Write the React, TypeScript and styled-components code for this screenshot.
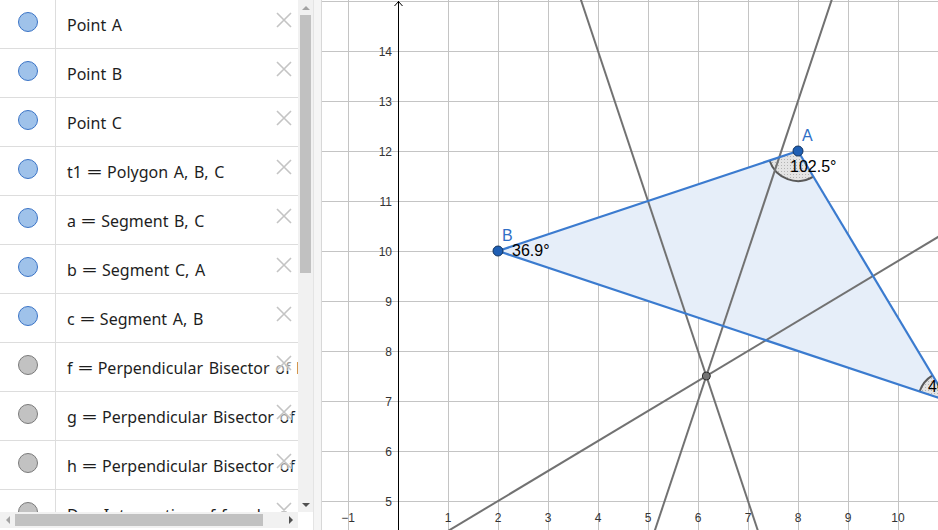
import React from "react";
import styled, { createGlobalStyle } from "styled-components";

type Item = {
  label: string;
  free: boolean;
};

const items: Item[] = [
  { label: "Point A", free: true },
  { label: "Point B", free: true },
  { label: "Point C", free: true },
  { label: "t1 = Polygon A, B, C", free: true },
  { label: "a = Segment B, C", free: true },
  { label: "b = Segment C, A", free: true },
  { label: "c = Segment A, B", free: true },
  { label: "f = Perpendicular Bisector of B, C", free: false },
  { label: "g = Perpendicular Bisector of C, A", free: false },
  { label: "h = Perpendicular Bisector of A, B", free: false },
  { label: "D = Intersection of f and g", free: false },
];

// graphics view: 50px per unit, x = 0 at svg x 76, y = 14 at svg y 51
const gx = (x: number) => 76 + 50 * x;
const gy = (y: number) => 751 - 50 * y;

const A = { x: 8, y: 12 };
const B = { x: 2, y: 10 };
const C = { x: 11, y: 7 };
const D = { x: 37 / 6, y: 7.5 };

const bisectors = [
  // AB: y = 26 - 3x
  [3, 17, 8, 2],
  // BC: y = 3x - 11
  [4, 1, 9, 16],
  // CA: y = (3x + 19) / 5
  [-3, 2, 12, 11],
];

const xTicks = [-1, 1, 2, 3, 4, 5, 6, 7, 8, 9, 10];
const yTicks = [14, 13, 12, 11, 10, 9, 8, 7, 6, 5];

const polar = (cx: number, cy: number, r: number, deg: number) => {
  const a = (deg * Math.PI) / 180;
  return [cx + r * Math.cos(a), cy + r * Math.sin(a)];
};

// angle sector on screen coords, from -> to going clockwise
const sector = (cx: number, cy: number, r: number, from: number, to: number) => {
  const [x1, y1] = polar(cx, cy, r, from);
  const [x2, y2] = polar(cx, cy, r, to);
  return {
    fill: `M${cx} ${cy} L${x1} ${y1} A${r} ${r} 0 0 1 ${x2} ${y2} Z`,
    arc: `M${x1} ${y1} A${r} ${r} 0 0 1 ${x2} ${y2}`,
  };
};

const angleA = sector(gx(A.x), gy(A.y), 30, 59.04, 161.57);
const angleC = sector(gx(C.x), gy(C.y), 30, 198.43, 239.04);

function renderLabel(label: string) {
  const [lhs, rhs] = label.split(" = ");
  if (rhs === undefined) return label;
  return (
    <>
      {lhs}
      <Eq>=</Eq>
      {rhs}
    </>
  );
}

export default function App() {
  return (
    <>
      <GlobalStyle />
      <Shell>
        <AlgebraPanel>
          <AlgebraBody>
            <ItemList>
              {items.map((item) => (
                <Row key={item.label}>
                  <MarbleCell>
                    <Marble $free={item.free} />
                  </MarbleCell>
                  <Definition>{renderLabel(item.label)}</Definition>
                  <DeleteButton>
                    <svg width="16" height="16" viewBox="0 0 16 16">
                      <path
                        d="M1 1 L15 15 M15 1 L1 15"
                        stroke="#c4c4c4"
                        strokeWidth="1.6"
                        fill="none"
                      />
                    </svg>
                  </DeleteButton>
                </Row>
              ))}
            </ItemList>
            <VScroll>
              <ArrowBox>
                <Triangle $dir="up" $dark={false} />
              </ArrowBox>
              <VThumb />
              <Spacer />
              <ArrowBox>
                <Triangle $dir="down" $dark />
              </ArrowBox>
            </VScroll>
          </AlgebraBody>
          <HScrollRow>
            <HScroll>
              <ArrowBox>
                <Triangle $dir="left" $dark={false} />
              </ArrowBox>
              <HThumb />
              <Spacer />
              <ArrowBox>
                <Triangle $dir="right" $dark />
              </ArrowBox>
            </HScroll>
            <Corner />
          </HScrollRow>
        </AlgebraPanel>
        <Splitter />
        <Graphics>
          <svg width="616" height="530" viewBox="0 0 616 530">
            <defs>
              <pattern id="dots" width="3" height="3" patternUnits="userSpaceOnUse">
                <rect width="3" height="3" fill="#e4e4e4" />
                <rect width="1" height="1" fill="#b4b4b4" />
              </pattern>
            </defs>

            {xTicks.map((t) => (
              <line
                key={`gx${t}`}
                x1={gx(t) + 0.5}
                y1={0}
                x2={gx(t) + 0.5}
                y2={530}
                stroke="#c4c4c4"
                strokeWidth="1"
              />
            ))}
            {[15, ...yTicks].map((t) => (
              <line
                key={`gy${t}`}
                x1={0}
                y1={gy(t) + 0.5}
                x2={616}
                y2={gy(t) + 0.5}
                stroke="#c4c4c4"
                strokeWidth="1"
              />
            ))}

            <line x1={76.5} y1={1} x2={76.5} y2={530} stroke="#000" strokeWidth="1" />
            <polyline points="72.5,6 76.5,1.5 80.5,6" fill="none" stroke="#000" strokeWidth="1" />

            {yTicks.map((t) => (
              <AxisLabel key={`ly${t}`} x={70} y={gy(t) + 5} textAnchor="end">
                {t}
              </AxisLabel>
            ))}
            {xTicks.map((t) => (
              <AxisLabel key={`lx${t}`} x={gx(t)} y={522} textAnchor="middle">
                {t < 0 ? `\u2212${-t}` : t}
              </AxisLabel>
            ))}

            <polygon
              points={`${gx(A.x)},${gy(A.y)} ${gx(B.x)},${gy(B.y)} ${gx(C.x)},${gy(C.y)}`}
              fill="#e6eef9"
            />

            <path d={angleA.fill} fill="url(#dots)" />
            <path d={angleA.arc} fill="none" stroke="#5a5a5a" strokeWidth="2" />
            <path d={angleC.fill} fill="url(#dots)" />
            <path d={angleC.arc} fill="none" stroke="#5a5a5a" strokeWidth="2" />

            {bisectors.map(([x1, y1, x2, y2], i) => (
              <line
                key={`b${i}`}
                x1={gx(x1)}
                y1={gy(y1)}
                x2={gx(x2)}
                y2={gy(y2)}
                stroke="#727272"
                strokeWidth="2"
              />
            ))}

            {[
              [A, B],
              [B, C],
              [C, A],
            ].map(([p, q], i) => (
              <line
                key={`s${i}`}
                x1={gx(p.x)}
                y1={gy(p.y)}
                x2={gx(q.x)}
                y2={gy(q.y)}
                stroke="#3b7bcf"
                strokeWidth="2.2"
              />
            ))}

            <circle cx={gx(D.x)} cy={gy(D.y)} r={4} fill="#737373" stroke="#2e2e2e" strokeWidth="1" />
            <circle cx={gx(A.x)} cy={gy(A.y)} r={5} fill="#1f5fb4" stroke="#12345f" strokeWidth="1" />
            <circle cx={gx(B.x)} cy={gy(B.y)} r={5} fill="#1f5fb4" stroke="#12345f" strokeWidth="1" />

            <PointLabel x={480} y={141}>A</PointLabel>
            <PointLabel x={180} y={241}>B</PointLabel>

            <AngleLabel x={468} y={172}>102.5°</AngleLabel>
            <AngleLabel x={190} y={256}>36.9°</AngleLabel>
            <AngleLabel x={606} y={392}>40.6°</AngleLabel>
          </svg>
        </Graphics>
      </Shell>
    </>
  );
}

const GlobalStyle = createGlobalStyle`
  html, body {
    margin: 0;
    padding: 0;
    background: #ffffff;
  }

  body {
    font-family: "Liberation Sans", Arial, sans-serif;
    overflow: hidden;
  }
`;

const Shell = styled.div`
  display: flex;
  width: 938px;
  height: 530px;
  overflow: hidden;
  background: #ffffff;
`;

const AlgebraPanel = styled.div`
  width: 313px;
  flex-shrink: 0;
  display: flex;
  flex-direction: column;
  background: #ffffff;
`;

const AlgebraBody = styled.div`
  display: flex;
  height: 512px;
`;

const ItemList = styled.div`
  width: 298px;
  overflow: hidden;
`;

const Row = styled.div`
  position: relative;
  display: flex;
  height: 48px;
  border-bottom: 1px solid #dddddd;
`;

const MarbleCell = styled.div`
  width: 56px;
  flex-shrink: 0;
  box-sizing: border-box;
  border-right: 1px solid #dddddd;
  display: flex;
  justify-content: center;
  padding-top: 12px;
`;

const Marble = styled.div<{ $free: boolean }>`
  width: 20px;
  height: 20px;
  box-sizing: border-box;
  border-radius: 50%;
  border: 1px solid ${(p) => (p.$free ? "#3b74c6" : "#7a7a7a")};
  background: ${(p) => (p.$free ? "#9fc2ea" : "#c2c2c2")};
`;

const Definition = styled.div`
  display: flex;
  align-items: center;
  padding: 2px 0 0 11px;
  font-family: "Noto Sans", "Liberation Sans", sans-serif;
  font-size: 16px;
  word-spacing: 1.5px;
  color: #1e1e1e;
  white-space: pre;
`;

const Eq = styled.span`
  display: inline-block;
  margin: 0 8px;
  transform: scaleX(1.7);
`;

const DeleteButton = styled.div`
  position: absolute;
  top: 12px;
  right: 6px;
  width: 16px;
  height: 16px;
  display: flex;
  background: rgba(255, 255, 255, 0.55);
`;

const VScroll = styled.div`
  width: 15px;
  display: flex;
  flex-direction: column;
  background: #f1f1f1;
`;

const ArrowBox = styled.div`
  width: 15px;
  height: 15px;
  flex-shrink: 0;
  display: flex;
  align-items: center;
  justify-content: center;
`;

const Triangle = styled.div<{ $dir: "up" | "down" | "left" | "right"; $dark: boolean }>`
  width: 0;
  height: 0;
  ${(p) => {
    const c = p.$dark ? "#505050" : "#a3a3a3";
    switch (p.$dir) {
      case "up":
        return `border-left: 4px solid transparent; border-right: 4px solid transparent; border-bottom: 4px solid ${c};`;
      case "down":
        return `border-left: 4px solid transparent; border-right: 4px solid transparent; border-top: 4px solid ${c};`;
      case "left":
        return `border-top: 4px solid transparent; border-bottom: 4px solid transparent; border-right: 4px solid ${c};`;
      default:
        return `border-top: 4px solid transparent; border-bottom: 4px solid transparent; border-left: 4px solid ${c};`;
    }
  }}
`;

const VThumb = styled.div`
  height: 258px;
  margin: 0 2px;
  background: #c1c1c1;
`;

const Spacer = styled.div`
  flex: 1;
`;

const HScrollRow = styled.div`
  display: flex;
  height: 16px;
  margin-bottom: 2px;
`;

const HScroll = styled.div`
  width: 298px;
  display: flex;
  align-items: center;
  background: #f1f1f1;
`;

const HThumb = styled.div`
  width: 248px;
  height: 12px;
  background: #c1c1c1;
`;

const Corner = styled.div`
  width: 15px;
  background: #ffffff;
`;

const Splitter = styled.div`
  width: 7px;
  flex-shrink: 0;
  background: #f5f5f5;
  border-left: 1px solid #e4e4e4;
`;

const Graphics = styled.div`
  flex: 1;
  border-left: 1px solid #d8d8d8;
  overflow: hidden;
  background: #ffffff;

  > svg {
    display: block;
  }
`;

const AxisLabel = styled.text`
  font-family: "Liberation Sans", Arial, sans-serif;
  font-size: 12px;
  fill: #333333;
`;

const PointLabel = styled.text`
  font-family: "Liberation Sans", Arial, sans-serif;
  font-size: 16px;
  fill: #2f6fc6;
`;

const AngleLabel = styled.text`
  font-family: "Liberation Sans", Arial, sans-serif;
  font-size: 16px;
  fill: #000000;
`;
